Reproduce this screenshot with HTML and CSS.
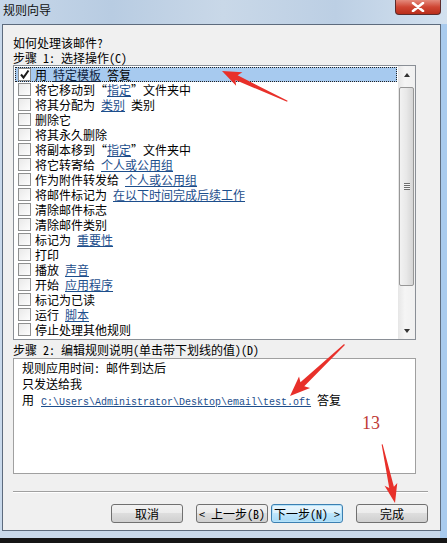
FILE: index.html
```html
<!DOCTYPE html>
<html>
<head>
  <meta charset="utf-8">
  <title>规则向导</title>
  <link rel="stylesheet" href="styles.css">
</head>
<body>
  <div class="window">
    <div class="titlebar">
      <span class="title">规则向导</span>
      <div class="close">
        <svg width="16" height="10" viewBox="0 0 16 10">
          <path d="M3 1 L13 9 M13 1 L3 9" stroke="#fff" stroke-width="2.6" stroke-linecap="round"/>
        </svg>
      </div>
    </div>

    <div class="client">
      <div class="label">如何处理该邮件?</div>
      <div class="label">步骤 1: 选择操作(C)</div>

      <div class="listbox">
        <div class="items">
          <div class="row selected">
            <span class="check on">
              <svg width="11" height="11" viewBox="0 0 11 11"><path d="M2 5.5 L4.5 8.5 L9.5 1.5" stroke="#1b1b1b" stroke-width="2" fill="none"/></svg>
            </span>
            <span>用 <a class="link">特定模板</a> 答复</span>
          </div>
          <div class="row"><span class="check"></span><span>将它移动到“<a class="link">指定</a>”文件夹中</span></div>
          <div class="row"><span class="check"></span><span>将其分配为 <a class="link">类别</a> 类别</span></div>
          <div class="row"><span class="check"></span><span>删除它</span></div>
          <div class="row"><span class="check"></span><span>将其永久删除</span></div>
          <div class="row"><span class="check"></span><span>将副本移到“<a class="link">指定</a>”文件夹中</span></div>
          <div class="row"><span class="check"></span><span>将它转寄给 <a class="link">个人或公用组</a></span></div>
          <div class="row"><span class="check"></span><span>作为附件转发给 <a class="link">个人或公用组</a></span></div>
          <div class="row"><span class="check"></span><span>将邮件标记为 <a class="link">在以下时间完成后续工作</a></span></div>
          <div class="row"><span class="check"></span><span>清除邮件标志</span></div>
          <div class="row"><span class="check"></span><span>清除邮件类别</span></div>
          <div class="row"><span class="check"></span><span>标记为 <a class="link">重要性</a></span></div>
          <div class="row"><span class="check"></span><span>打印</span></div>
          <div class="row"><span class="check"></span><span>播放 <a class="link">声音</a></span></div>
          <div class="row"><span class="check"></span><span>开始 <a class="link">应用程序</a></span></div>
          <div class="row"><span class="check"></span><span>标记为已读</span></div>
          <div class="row"><span class="check"></span><span>运行 <a class="link">脚本</a></span></div>
          <div class="row"><span class="check"></span><span>停止处理其他规则</span></div>
        </div>
        <div class="scrollbar">
          <div class="sb-btn"><span class="tri up"></span></div>
          <div class="sb-track">
            <div class="sb-thumb"><span class="grip"></span></div>
          </div>
          <div class="sb-btn"><span class="tri down"></span></div>
        </div>
      </div>

      <div class="label step2">步骤 2: 编辑规则说明(单击带下划线的值)(D)</div>
      <div class="desc">
        <div>规则应用时间: 邮件到达后</div>
        <div>只发送给我</div>
        <div>用 <a class="link path">C:\Users\Administrator\Desktop\email\test.oft</a> 答复</div>
      </div>

      <div class="separator"></div>

      <div class="buttons">
        <button type="button" class="btn">取消</button>
        <button type="button" class="btn back">&lt; 上一步(B)</button>
        <button type="button" class="btn default">下一步(N) &gt;</button>
        <button type="button" class="btn finish">完成</button>
      </div>
    </div>
  </div>

  <!-- annotation arrows drawn over the screenshot -->
  <svg class="marks" width="447" height="543" viewBox="0 0 447 543">
    <g transform="translate(222,71) rotate(204.8)">
      <polygon points="0,0 -19,-7.5 -16,-2.6 -72,-0.6 -72,0.6 -16,2.6 -19,7.5"/>
    </g>
    <g transform="translate(290,396) rotate(136.6)">
      <polygon points="0,0 -20,-8 -17,-2.8 -75,-0.6 -75,0.6 -17,2.8 -20,8"/>
    </g>
    <g transform="translate(395,503) rotate(77.6)">
      <polygon points="0,0 -19,-6.5 -16,-2.4 -60,-0.5 -60,0.5 -16,2.4 -19,6.5"/>
    </g>
    <text x="362" y="429" class="num">13</text>
  </svg>
</body>
</html>
```

FILE: styles.css
```css
html, body {
  margin: 0;
  padding: 0;
  background: #151515;
  font-family: "Noto Sans CJK SC", "Noto Sans", sans-serif;
  font-size: 12px;
  font-feature-settings: "hwid" 1;
  color: #000;
}
.window {
  position: relative;
  width: 447px;
  height: 538px;
  display: flex;
  flex-direction: column;
  background: linear-gradient(to right, #c9d9eb 0, #c9d9eb 98.4%, #a9cbee 98.4%, #a9cbee 100%);
}
.titlebar {
  height: 24px;
  display: flex;
  justify-content: space-between;
  align-items: flex-start;
  background: linear-gradient(to right, #c7d7e9, #b8cce2 25%, #c9d8e8 50%, #bccfe4 75%, #d3e1ef);
}
.title {
  padding-left: 3px;
  line-height: 20px;
  color: #111;
}
.close {
  width: 46px;
  height: 15px;
  margin-right: 6px;
  box-sizing: border-box;
  border: 1px solid #5c2b2b;
  border-top: none;
  border-radius: 0 0 4px 4px;
  background: linear-gradient(to bottom, #e48a7c, #cf4634 50%, #b92e1b 100%);
  display: flex;
  align-items: center;
  justify-content: center;
}
.client {
  margin-left: 2px;
  width: 439px;
  height: 507px;
  box-sizing: border-box;
  border: 1px solid #5d6b7d;
  background: #f0f0f0;
  padding: 10px 12px 0 10px;
}
.label {
  line-height: 15px;
  height: 15px;
  white-space: nowrap;
}
.listbox {
  width: 403px;
  height: 275px;
  box-sizing: border-box;
  border: 1px solid #8a8f96;
  background: #fff;
  display: flex;
}
.items {
  flex: 1;
  padding: 1px 1px 0 1px;
}
.row {
  height: 15px;
  box-sizing: border-box;
  display: flex;
  align-items: center;
  gap: 4px;
  padding-left: 2px;
  line-height: 15px;
  white-space: nowrap;
  border: 1px solid transparent;
}
.row.selected {
  background: #a7caef;
  border: 1px dotted #222;
}
.check {
  width: 13px;
  height: 13px;
  box-sizing: border-box;
  border: 1px solid #8e8f8f;
  background: linear-gradient(135deg, #e9e9e9, #fdfdfd);
  display: flex;
  align-items: center;
  justify-content: center;
  flex-shrink: 0;
}
.check.on {
  background: #fff;
}
.link {
  color: #1d4e8c;
  text-decoration: underline;
}
.selected .link {
  color: #10243f;
}
.scrollbar {
  width: 17px;
  display: flex;
  flex-direction: column;
  background: linear-gradient(to right, #e6e6e6, #f5f5f5 40%, #f0f0f0);
}
.sb-btn {
  height: 17px;
  display: flex;
  align-items: center;
  justify-content: center;
}
.tri {
  width: 0;
  height: 0;
  border-left: 3px solid transparent;
  border-right: 3px solid transparent;
}
.tri.up {
  border-bottom: 4px solid #333;
}
.tri.down {
  border-top: 4px solid #333;
}
.sb-track {
  flex: 1;
  padding: 4px 1px 36px 1px;
  display: flex;
}
.sb-thumb {
  flex: 1;
  border: 1px solid #979797;
  border-radius: 2px;
  background: linear-gradient(to right, #f2f2f2, #e8e8e8 50%, #d5d5d5);
  display: flex;
  align-items: center;
  justify-content: center;
}
.grip {
  width: 6px;
  height: 7px;
  background: repeating-linear-gradient(to bottom, #6d6d6d 0, #6d6d6d 1px, #f4f4f4 1px, #f4f4f4 2px);
}
.step2 {
  margin-top: 2px;
}
.desc {
  margin-top: 1px;
  width: 403px;
  height: 116px;
  box-sizing: border-box;
  border: 1px solid #a0a0a0;
  background: #fff;
  padding: 1px 0 0 8px;
  line-height: 16px;
  white-space: nowrap;
}
.path {
  font-family: "Liberation Mono", monospace;
  font-size: 10px;
  margin-left: 1px;
}
.separator {
  margin-top: 17px;
  width: 415px;
  height: 1px;
  background: #a0a0a0;
  border-bottom: 1px solid #fff;
}
.buttons {
  margin-top: 11px;
  width: 415px;
  display: flex;
  justify-content: flex-end;
}
.btn {
  width: 72px;
  height: 19px;
  padding: 0;
  margin: 0;
  box-sizing: border-box;
  border: 1px solid #707070;
  border-radius: 3px;
  background: linear-gradient(to bottom, #f2f2f2 0, #ebebeb 50%, #dddddd 50%, #cfcfcf 100%);
  font-family: "Noto Sans CJK SC", sans-serif;
  font-size: 12px;
  font-feature-settings: "hwid" 1;
  line-height: 15px;
  color: #000;
}
.btn.back {
  margin-left: 13px;
}
.btn.default {
  margin-left: 3px;
  border-color: #3c7fb1;
  background: linear-gradient(to bottom, #eaf6fd 0, #d9f0fc 50%, #bee6fd 50%, #a7d9f5 100%);
  box-shadow: inset 0 0 0 1px #b5e3fa;
}
.btn.finish {
  margin-left: 13px;
}
.marks {
  position: absolute;
  left: 0;
  top: 0;
  pointer-events: none;
  fill: #e8302a;
}
.num {
  font-family: "Liberation Serif", serif;
  font-size: 18px;
  fill: #c03a36;
}
```
